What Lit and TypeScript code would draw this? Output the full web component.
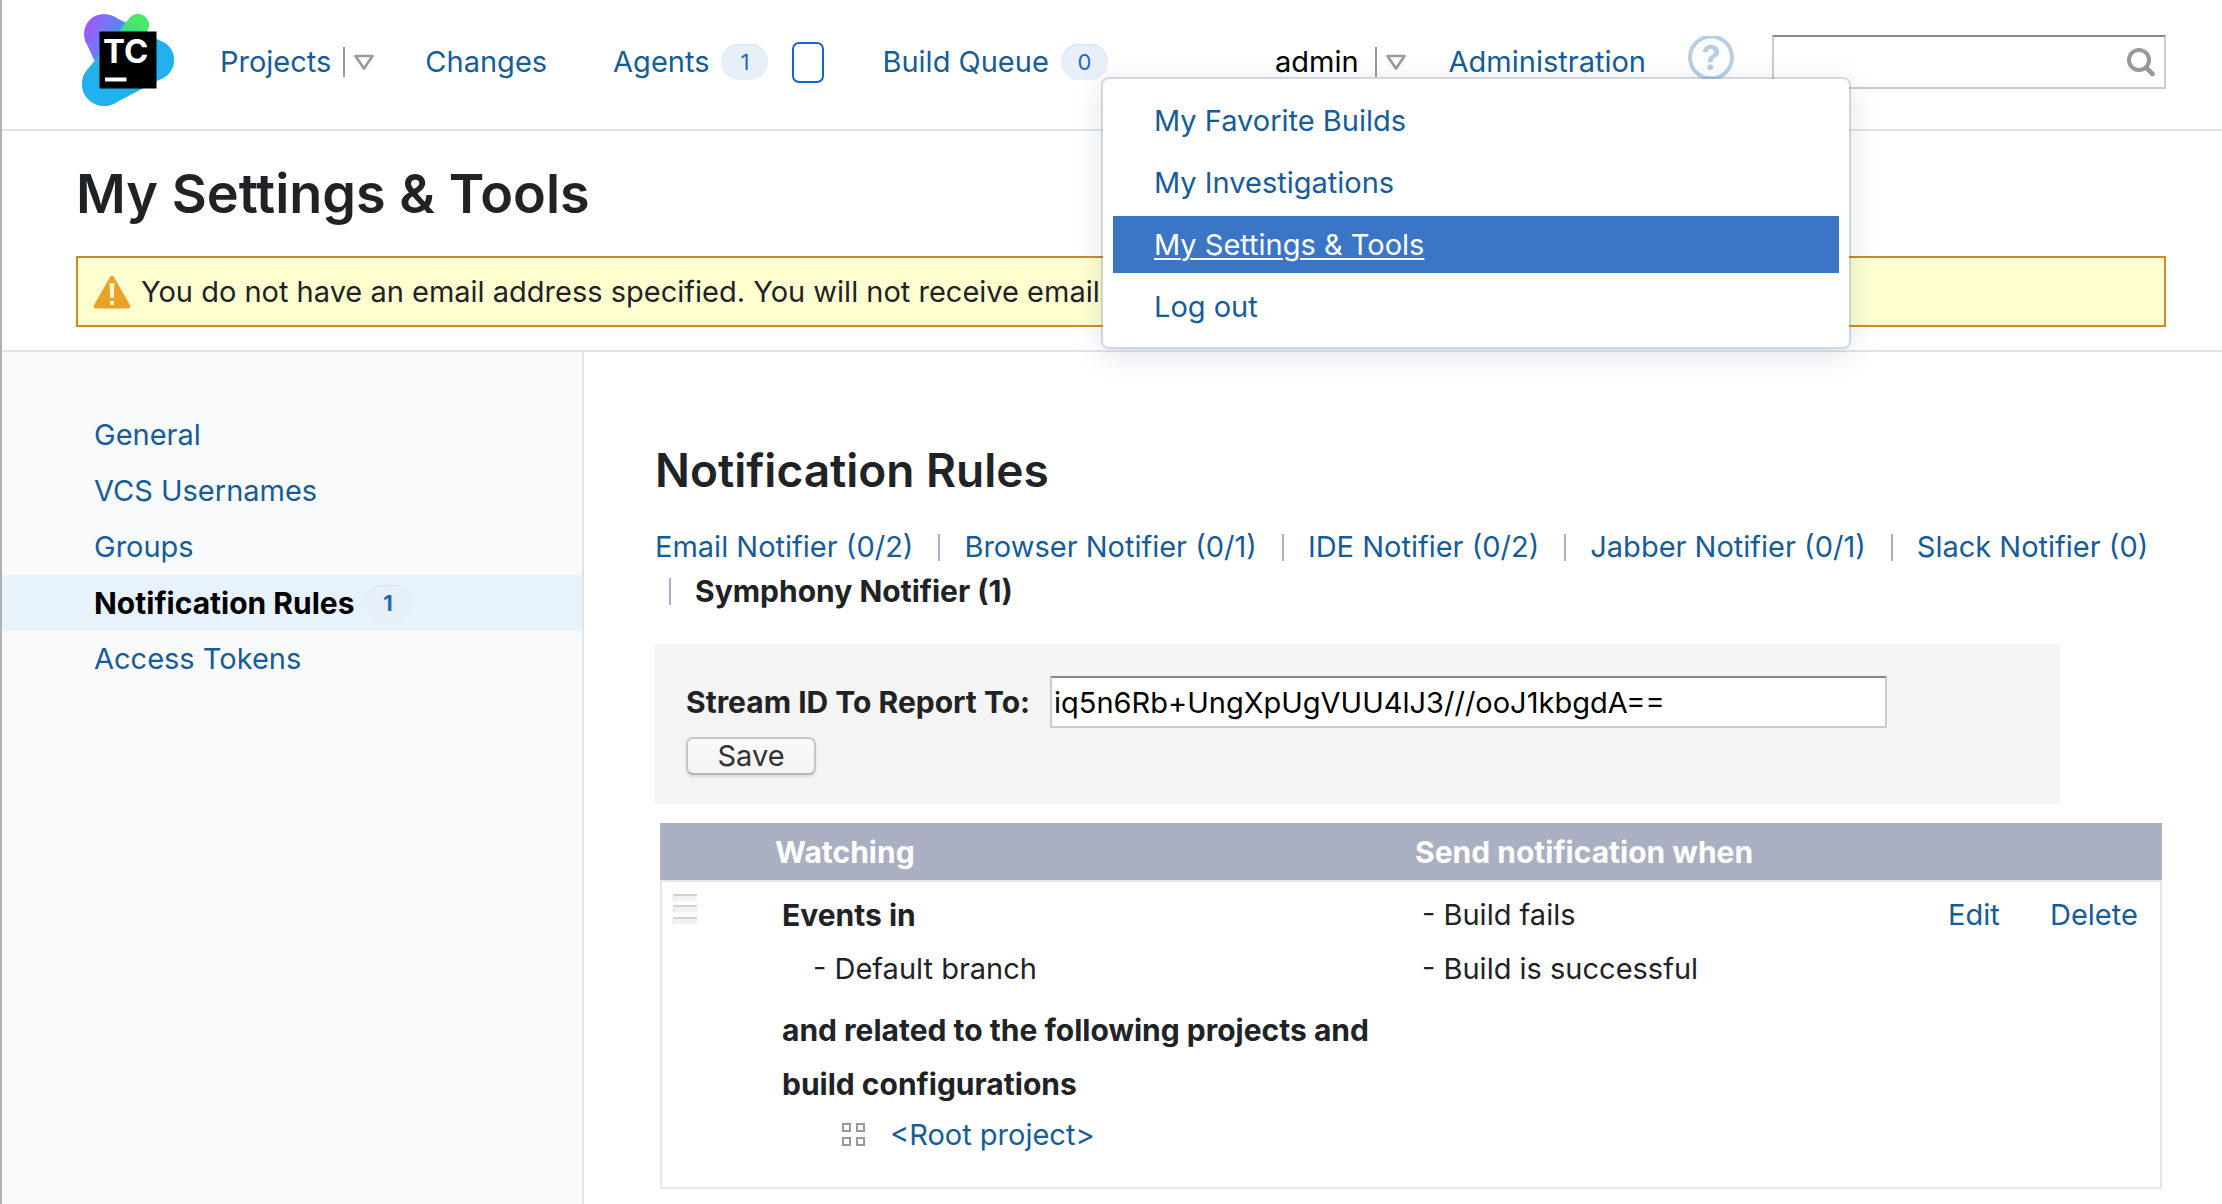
import { LitElement, html, svg, css } from "lit";
import { customElement, property } from "lit/decorators.js";

const triangle = html`
  <svg class="triangle" width="22" height="17" viewBox="0 0 22 17" aria-hidden="true">
    <path d="M2.5 2h17L11 14.5z" fill="none" stroke="#999" stroke-width="2.6" stroke-linejoin="round" />
  </svg>
`;

@customElement("tc-logo")
export class TcLogo extends LitElement {
  static styles = css`
    :host {
      display: block;
    }
    svg {
      display: block;
    }
    .letters {
      font: 700 33px Inter, "Liberation Sans", sans-serif;
      fill: #fff;
    }
  `;

  render() {
    return html`
      <svg width="92" height="96" viewBox="12 14 92 96" role="img" aria-label="TeamCity">
        ${svg`
        <defs>
          <linearGradient id="violet" gradientUnits="userSpaceOnUse" x1="16" y1="30" x2="60" y2="52">
            <stop offset="0" stop-color="#9d5bf7" />
            <stop offset="0.3" stop-color="#7a74f6" />
            <stop offset="0.7" stop-color="#4190f3" />
            <stop offset="1" stop-color="#22b1ef" />
          </linearGradient>
          <linearGradient id="green" gradientUnits="userSpaceOnUse" x1="72" y1="20" x2="36" y2="82">
            <stop offset="0.08" stop-color="#48e96b" />
            <stop offset="0.25" stop-color="#3bd98a" />
            <stop offset="0.6" stop-color="#2ab9c8" />
            <stop offset="1" stop-color="#22b1ef" />
          </linearGradient>
        </defs>
        <g fill="url(#violet)">
          <circle cx="34" cy="34" r="20" />
          <circle cx="84" cy="60" r="20" />
          <path d="M43.2 16.3 93.2 42.3 74.8 77.7 24 60 15 40z" />
        </g>
        <g fill="#22b1ef">
          <circle cx="34" cy="84" r="22" />
          <circle cx="84" cy="60" r="20" />
          <path d="M44.2 103.5 93.3 77.7 76 41.7 25.2 63.8z" />
        </g>
        <path
          fill="url(#green)"
          d="M17 70.1 59.5 18A11 11 0 0 1 78.3 28.9L54.6 91.8A22 22 0 1 1 17 70.1z"
        />
        <path d="M29.5 31.5h57v57h-57z" />
        <path d="M35 77.5h21.5v4H35z" fill="#fff" />
        <text class="letters" x="33" y="63">TC</text>
        `}
      </svg>
    `;
  }
}

@customElement("count-badge")
export class CountBadge extends LitElement {
  @property() value = "";

  static styles = css`
    :host {
      display: inline-flex;
      align-items: center;
      justify-content: center;
      box-sizing: border-box;
      height: 36px;
      min-width: 47px;
      padding: 0 12px;
      border-radius: 18px;
      background: #e7eff8;
      box-shadow: inset 0 1px 0 #d3e2f4;
      color: #1f66c1;
      font-size: 22px;
      line-height: 36px;
    }
  `;

  render() {
    return html`${this.value}`;
  }
}

@customElement("tc-header")
export class TcHeader extends LitElement {
  static styles = css`
    :host {
      display: block;
    }
    .header {
      display: flex;
      align-items: center;
      padding: 14px 56px 19px 80px;
      border-bottom: 2px solid #dfe5ea;
    }
    a {
      color: #165c98;
      text-decoration: none;
    }
    .nav,
    .menu {
      list-style: none;
      margin: 0;
      padding: 0;
    }
    .nav {
      display: flex;
      align-items: center;
      flex: 1;
      margin-left: 46px;
      line-height: 36px;
      white-space: nowrap;
    }
    .item {
      display: flex;
      align-items: center;
      margin-right: 50px;
    }
    .item.changes {
      margin-right: 66px;
    }
    .item.agents {
      margin-right: 58px;
    }
    .item.last {
      margin-right: 0;
    }
    .item count-badge {
      margin-left: 12px;
    }
    .toggle {
      display: flex;
      align-items: center;
      margin-left: 12px;
      padding: 0 0 0 8px;
      height: 30px;
      border: 0;
      border-left: 2px solid #999;
      background: none;
    }
    .compat {
      width: 32px;
      height: 41px;
      margin-left: 24px;
      padding: 0;
      border: 2px solid #1266cc;
      border-radius: 7px;
      background: #fff;
    }
    .item.user {
      position: relative;
      margin-left: auto;
      margin-right: 42px;
    }
    .user > a {
      color: #000;
      margin-right: 4px;
    }
    .menu {
      position: absolute;
      z-index: 2;
      top: 33px;
      left: -174px;
      display: flex;
      flex-direction: column;
      gap: 5px;
      box-sizing: border-box;
      width: 750px;
      padding: 13px 10px 12px;
      border: 2px solid rgba(80, 110, 145, 0.24);
      border-radius: 8px;
      background: #fff;
      background-clip: padding-box;
      box-shadow: 0 6px 28px rgba(0, 42, 76, 0.13);
    }
    .menu a {
      display: block;
      padding: 0 41px;
      line-height: 57px;
    }
    .menu a.current {
      background: #3b75c6;
      color: #fff;
      text-decoration: underline;
      text-underline-offset: 3px;
      text-decoration-thickness: 2px;
    }
    .help {
      display: block;
      margin: 0 38px 10px 42px;
    }
    .help svg {
      display: block;
    }
    .mark {
      font: 700 34px Inter, "Liberation Sans", sans-serif;
    }
    .search {
      display: flex;
      align-items: center;
      box-sizing: border-box;
      width: 394px;
      height: 54px;
      padding-right: 9px;
      border: 2px solid #ccc;
      border-top-color: #888;
      background: #fff;
    }
    .search input {
      flex: 1;
      min-width: 0;
      height: 100%;
      box-sizing: border-box;
      padding: 0 8px;
      border: 0;
      outline: 0;
      background: none;
      font: inherit;
    }
  `;

  render() {
    return html`
      <header class="header">
        <tc-logo></tc-logo>
        <ul class="nav">
          <li class="item">
            <a href="#projects">Projects</a>
            <button class="toggle" aria-label="Show projects">${triangle}</button>
          </li>
          <li class="item changes"><a href="#changes">Changes</a></li>
          <li class="item agents">
            <a href="#agents">Agents</a>
            <count-badge value="1"></count-badge>
            <button class="compat" aria-label="Agents panel"></button>
          </li>
          <li class="item">
            <a href="#queue">Build Queue</a>
            <count-badge value="0"></count-badge>
          </li>
          <li class="item user">
            <a href="#admin">admin</a>
            <button class="toggle" aria-label="User menu" aria-expanded="true">${triangle}</button>
            <ul class="menu">
              <li><a href="#favorites">My Favorite Builds</a></li>
              <li><a href="#investigations">My Investigations</a></li>
              <li><a class="current" href="#settings">My Settings &amp; Tools</a></li>
              <li><a href="#logout">Log out</a></li>
            </ul>
          </li>
          <li class="item last"><a href="#administration">Administration</a></li>
        </ul>
        <a class="help" href="#help" aria-label="Help">
          <svg width="46" height="43" viewBox="0 0 46 43" aria-hidden="true">
            <circle cx="23" cy="21.5" r="21" fill="none" stroke="#b5cfe5" stroke-width="4" />
            <text class="mark" x="23" y="34" text-anchor="middle" fill="#b5cfe5">?</text>
          </svg>
        </a>
        <label class="search">
          <input type="text" aria-label="Search" />
          <svg width="28" height="29" viewBox="0 0 28 29" aria-hidden="true">
            <circle cx="12" cy="12" r="10" fill="none" stroke="#999" stroke-width="4" />
            <path d="m19 19.5 6.500 6.500" stroke="#999" stroke-width="4.6" stroke-linecap="round" />
          </svg>
        </label>
      </header>
    `;
  }
}

@customElement("tc-sidebar")
export class TcSidebar extends LitElement {
  static styles = css`
    :host {
      display: block;
      box-sizing: border-box;
      flex: 0 0 582px;
      padding-top: 55px;
      border-right: 2px solid #dfe5ea;
      background: #f8fafc;
    }
    a {
      display: flex;
      align-items: center;
      gap: 10px;
      padding-left: 92px;
      line-height: 56px;
      color: #165c98;
      text-decoration: none;
    }
    a.current {
      background: #e8f2fd;
      color: #000;
      font-size: 30px;
      font-weight: 700;
    }
  `;

  render() {
    return html`
      <nav aria-label="Settings">
        <a href="#general">General</a>
        <a href="#vcs">VCS Usernames</a>
        <a href="#groups">Groups</a>
        <a class="current" href="#rules">Notification Rules <count-badge value="1"></count-badge></a>
        <a href="#tokens">Access Tokens</a>
      </nav>
    `;
  }
}

@customElement("notification-rules")
export class NotificationRules extends LitElement {
  static styles = css`
    :host {
      display: block;
      flex: 1;
      min-width: 0;
      padding: 90px 56px 15px 71px;
    }
    a {
      color: #165c98;
      text-decoration: none;
    }
    h2 {
      margin: 0 0 27px;
      font-size: 46px;
      font-weight: 600;
      line-height: 56px;
    }
    .tabs {
      display: flex;
      flex-wrap: wrap;
      margin: 0 0 31px;
      padding: 0;
      list-style: none;
      line-height: 44px;
    }
    .tab {
      display: flex;
      align-items: center;
      padding-right: 11px;
    }
    .tab + .tab::before {
      content: "";
      width: 2px;
      height: 27px;
      margin: 0 24px 0 14px;
      background: #a5b2c4;
    }
    .tab.current {
      font-size: 30px;
      font-weight: 700;
    }
    .panel {
      box-sizing: border-box;
      width: 93%;
      padding: 32px 31px 29px;
      background: #f4f4f4;
    }
    .field {
      display: flex;
      align-items: center;
      gap: 20px;
      margin-bottom: 9px;
    }
    label {
      font-size: 30px;
      font-weight: 700;
      white-space: nowrap;
    }
    input {
      box-sizing: border-box;
      flex: 0 1 837px;
      min-width: 0;
      height: 52px;
      padding: 0 2px;
      border: 2px solid #ccc;
      border-top-color: #888;
      border-radius: 0;
      background: #fff;
      color: #000;
      font: inherit;
    }
    .save {
      display: block;
      box-sizing: border-box;
      width: 130px;
      height: 38px;
      padding: 0;
      border: 2px solid #c6c6c6;
      border-bottom-color: #b4b4b4;
      border-radius: 7px;
      background: linear-gradient(#fafafa, #f3f3f3);
      box-shadow: 0 2px 3px rgba(0, 0, 0, 0.1);
      color: #333;
      font: inherit;
      line-height: 34px;
    }
    .frame {
      margin: 19px 4px 0 5px;
    }
    table {
      width: 100%;
      table-layout: fixed;
      border-spacing: 0;
      line-height: 54px;
    }
    .col-handle {
      width: 108px;
    }
    .col-watching {
      width: 640px;
    }
    .col-edit {
      width: 102px;
    }
    .col-delete {
      width: 126px;
    }
    th {
      height: 57px;
      padding: 0 7px;
      border-bottom: 2px solid #e3e8ee;
      background: #abafc2;
      color: #fff;
      font-size: 30px;
      font-weight: 700;
      text-align: left;
    }
    td {
      padding: 6px 0 28px 14px;
      border-bottom: 2px solid #e3e8ee;
      vertical-align: top;
    }
    td:first-child {
      padding: 12px 0 0 11px;
      border-left: 2px solid #e3e8ee;
    }
    td:last-child {
      border-right: 2px solid #e3e8ee;
    }
    .handle {
      display: block;
    }
    .strong {
      padding-right: 12px;
      font-size: 30px;
      font-weight: 700;
    }
    .branch {
      margin-bottom: 7px;
      padding-left: 31px;
    }
    .project {
      display: flex;
      align-items: center;
      gap: 24px;
      padding-left: 60px;
      line-height: 48px;
    }
  `;

  render() {
    return html`
      <h2>Notification Rules</h2>
      <ul class="tabs">
        <li class="tab"><a href="#email">Email Notifier (0/2)</a></li>
        <li class="tab"><a href="#browser">Browser Notifier (0/1)</a></li>
        <li class="tab"><a href="#ide">IDE Notifier (0/2)</a></li>
        <li class="tab"><a href="#jabber">Jabber Notifier (0/1)</a></li>
        <li class="tab"><a href="#slack">Slack Notifier (0)</a></li>
        <li class="tab current">Symphony Notifier (1)</li>
      </ul>
      <form class="panel" @submit=${(e: Event) => e.preventDefault()}>
        <div class="field">
          <label for="stream">Stream ID To Report To:</label>
          <input id="stream" type="text" value="iq5n6Rb+UngXpUgVUU4lJ3///ooJ1kbgdA==" />
        </div>
        <button class="save">Save</button>
      </form>
      <div class="frame">
        <table>
          <colgroup>
            <col class="col-handle" />
            <col class="col-watching" />
            <col />
            <col class="col-edit" />
            <col class="col-delete" />
          </colgroup>
          <thead>
            <tr>
              <th></th>
              <th>Watching</th>
              <th colspan="3">Send notification when</th>
            </tr>
          </thead>
          <tbody>
            <tr>
              <td>
                <svg class="handle" width="24" height="30" viewBox="0 0 24 30" aria-hidden="true">
                  ${[0, 11, 23].map(
                    (y) => svg`
                      <rect y=${y} width="24" height="7" fill="#f1f1f1" />
                      <rect y=${y} width="24" height="2" fill="#d1d1d1" />
                      <rect y=${y} width="1" height="7" fill="#dcdcdc" />`,
                  )}
                </svg>
              </td>
              <td>
                <div class="strong">Events in</div>
                <div class="branch">- Default branch</div>
                <div class="strong">and related to the following projects and build configurations</div>
                <div class="project">
                  <svg width="24" height="24" viewBox="0 0 24 24" aria-hidden="true">
                    <path
                      d="M1 1h7v7H1zM15 1h7v7h-7zM1 15h7v7H1zM15 15h7v7h-7z"
                      fill="none"
                      stroke="#999"
                      stroke-width="2"
                    />
                  </svg>
                  <a href="#root">&lt;Root project&gt;</a>
                </div>
              </td>
              <td>
                <div>- Build fails</div>
                <div>- Build is successful</div>
              </td>
              <td><a href="#edit">Edit</a></td>
              <td><a href="#delete">Delete</a></td>
            </tr>
          </tbody>
        </table>
      </div>
    `;
  }
}

@customElement("app-root")
export class AppRoot extends LitElement {
  static styles = css`
    :host {
      display: flex;
      flex-direction: column;
      box-sizing: border-box;
      min-height: 100vh;
      border-left: 2px solid #b1b1b1;
      background: #fff;
      color: #1f2326;
      font: 29px/36px Inter, "Liberation Sans", sans-serif;
    }
    .title {
      padding: 27px 56px 23px 74px;
      border-bottom: 2px solid #dfe5ea;
    }
    h1 {
      margin: 0 0 26px;
      font-size: 54px;
      font-weight: 600;
      line-height: 72px;
    }
    .alert {
      display: flex;
      align-items: center;
      gap: 10px;
      padding: 0 15px;
      border: 2px solid #cc8c22;
      background: #ffffd0;
      line-height: 67px;
    }
    .body {
      display: flex;
      flex: 1;
    }
  `;

  render() {
    return html`
      <tc-header></tc-header>
      <section class="title">
        <h1>My Settings &amp; Tools</h1>
        <div class="alert" role="alert">
          <svg width="38" height="34" viewBox="0 0 38 34" aria-hidden="true">
            <path
              d="M17 2.2Q19-1 21 2.2L37 30Q38.500 33.500 35 33.500H3Q-.500 33.500 1 30z"
              fill="#eca226"
            />
            <path d="M16.500 8h5l-.8 15h-3.400zM17 26h4v4h-4z" fill="#ffffd0" />
          </svg>
          <span>You do not have an email address specified. You will not receive email</span>
        </div>
      </section>
      <main class="body">
        <tc-sidebar></tc-sidebar>
        <notification-rules></notification-rules>
      </main>
    `;
  }
}
